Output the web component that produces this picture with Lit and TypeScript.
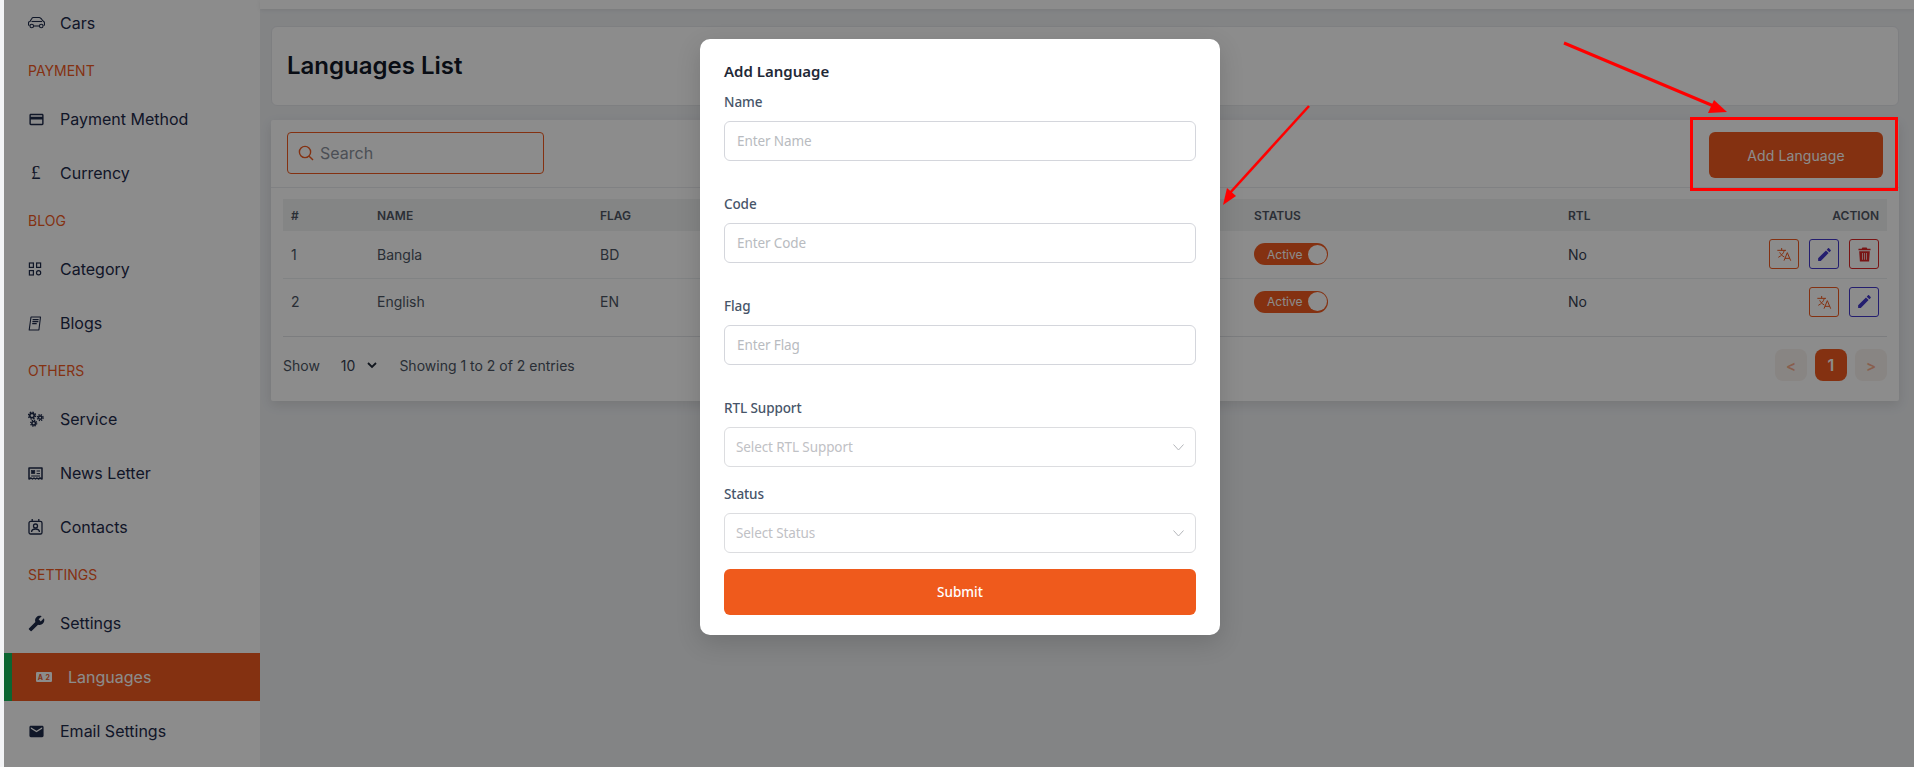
import { LitElement, html, css, svg } from "lit";
import { customElement } from "lit/decorators.js";

const ic = (body: unknown, size = 16) => html`<svg width=${size} height=${size} viewBox="0 0 24 24" fill="currentColor">${body}</svg>`;
const icons: Record<string, unknown> = {
  car: html`<svg width="17" height="12" viewBox="0 0 34 24" fill="none" stroke="currentColor" stroke-width="2.2"><path d="M3 17c-1.5 0-2-1-2-2v-3c0-2 1-3 3-3l3-5c1-2 2-3 4-3h11c2 0 3 1 5 3l3 4c2 1 3 2 3 4v3c0 1-.5 2-2 2"/><path d="M7 9h21"/><path d="M11 18h12"/><circle cx="7.5" cy="18" r="3.6"/><circle cx="26.5" cy="18" r="3.6"/></svg>`,
  card: ic(svg`<path d="M20 4H4c-1.11 0-1.99.89-1.99 2L2 18c0 1.11.89 2 2 2h16c1.11 0 2-.89 2-2V6c0-1.11-.89-2-2-2zm0 14H4v-6h16v6zm0-10H4V6h16v2z"/>`, 17),
  category: html`<svg width="14" height="14" viewBox="0 0 14 14" fill="none" stroke="currentColor" stroke-width="1.2"><rect x="1.4" y="1" width="4" height="4.4"/><rect x="8.6" y="1" width="4" height="4.4"/><rect x="1.4" y="8.6" width="4" height="4.4"/><circle cx="10.6" cy="10.8" r="2.1"/></svg>`,
  blog: html`<svg width="14" height="15" viewBox="0 0 14 15" fill="none" stroke="currentColor" stroke-width="1.1"><path d="M3 1h9.5l-1.6 13H1.2z" stroke-linejoin="round"/><path d="M4.6 3.6h6M4.4 5.6h6M4.2 7.6h4.5"/></svg>`,
  gears: html`<svg width="16" height="16" viewBox="0 0 16 16" fill="none" stroke="currentColor"><circle cx="4" cy="4.6" r="2.2" stroke-width="1.6"/><circle cx="4" cy="4.6" r="3.5" stroke-width="1.4" stroke-dasharray="1.5 1.25"/><circle cx="12.2" cy="6.6" r="1.7" stroke-width="1.5"/><circle cx="12.2" cy="6.6" r="2.9" stroke-width="1.3" stroke-dasharray="1.3 1"/><circle cx="5.7" cy="12.2" r="1.8" stroke-width="1.5"/><circle cx="5.7" cy="12.2" r="3" stroke-width="1.3" stroke-dasharray="1.3 1.05"/></svg>`,
  news: html`<svg width="15" height="15" viewBox="0 0 15 15" fill="none" stroke="currentColor" stroke-width="1.5"><path d="M1 13V2h13v11l-2-1-1.6 1-1.5-1-1.4 1-1.5-1-1.5 1-1.5-1z" stroke-linejoin="round"/><rect x="3.4" y="4.4" width="3.4" height="3.2" fill="currentColor" stroke-width=".6"/><path d="M8.6 5h3.4M8.6 7.6h3.4M3.2 10h8.8" stroke-width="1"/></svg>`,
  contact: html`<svg width="15" height="16" viewBox="0 0 15 16" fill="none" stroke="currentColor" stroke-width="1.3"><rect x="1" y="2.4" width="13" height="12.6" rx="1.6"/><path d="M4.2 0v2.4M10.8 0v2.4"/><circle cx="7.5" cy="7" r="2"/><path d="M3.6 13c0-2.2 1.6-3 3.9-3s3.9.8 3.9 3"/></svg>`,
  wrench: html`<svg width="17" height="17" viewBox="0 0 24 24" fill="currentColor"><g transform="translate(24 0) scale(-1 1)"><path d="M22.7 19l-9.1-9.1c.9-2.3.4-5-1.5-6.9-2-2-5-2.4-7.4-1.3L9 6 6 9 1.6 4.7C.4 7.1.9 10.1 2.9 12.1c1.9 1.9 4.6 2.4 6.9 1.5l9.1 9.1c.4.4 1 .4 1.4 0l2.3-2.3c.5-.4.5-1.1.1-1.4z"/></g></svg>`,
  mail: ic(svg`<path d="M20 4H4c-1.1 0-1.99.9-1.99 2L2 18c0 1.1.9 2 2 2h16c1.1 0 2-.9 2-2V6c0-1.1-.9-2-2-2zm0 4l-8 5-8-5V6l8 5 8-5v2z"/>`, 17),
  lang: html`<svg width="16" height="10" viewBox="0 0 16 10"><rect width="16" height="10" rx="1.2" fill="currentColor"/><text x="4.4" y="7.6" font-size="7" font-weight="700" text-anchor="middle" font-family="Inter" fill="#f15a1f">A</text><text x="11.6" y="7.6" font-size="7" font-weight="700" text-anchor="middle" font-family="Inter" fill="#f15a1f">2</text></svg>`,
};
const translate = html`<svg width="16" height="16" viewBox="0 0 24 24" fill="none" stroke="currentColor" stroke-width="1.5"><path d="M2 6.5h13M8.5 3v3.5M12.5 6.5c-1 4-4 8-9 10.5M5.5 9.5c1.5 3 4 5.500 7 7"/><path d="M12 22l5-12 5 12M13.500 18.500h7"/></svg>`;
const pencil = ic(svg`<path d="M3 17.25V21h3.750L17.810 9.940l-3.750-3.750L3 17.250zM20.710 7.040c.390-.390.390-1.020 0-1.410l-2.340-2.340c-.390-.390-1.020-.390-1.410 0l-1.830 1.830 3.750 3.750 1.830-1.830z"/>`, 17);
const trash = ic(svg`<path fill-rule="evenodd" d="M9 2h6l1 2h4.500v2h-17V4H8l1-2zM4.500 7.500h15L18.500 22h-13L4.500 7.500zM8.500 10v9.500h1V10h-1zm3 0v9.500h1V10h-1zm3 0v9.500h1V10h-1z"/>`, 17);

type Item = { s?: string; t?: string; i?: string; pound?: boolean; active?: boolean };
const menu: Item[] = [
  { t: "Cars", i: "car" },
  { s: "PAYMENT" },
  { t: "Payment Method", i: "card" },
  { t: "Currency", pound: true },
  { s: "BLOG" },
  { t: "Category", i: "category" },
  { t: "Blogs", i: "blog" },
  { s: "OTHERS" },
  { t: "Service", i: "gears" },
  { t: "News Letter", i: "news" },
  { t: "Contacts", i: "contact" },
  { s: "SETTINGS" },
  { t: "Settings", i: "wrench" },
  { t: "Languages", i: "lang", active: true },
  { t: "Email Settings", i: "mail" },
];

@customElement("app-root")
export class AppRoot extends LitElement {
  static styles = css`
    :host { display: block; position: relative; width: 1914px; height: 767px; overflow: hidden; font-family: Inter, "Noto Sans", sans-serif; background: #f3f4f6; }
    * { box-sizing: border-box; }
    .shell { display: flex; height: 767px; padding-left: 4px; }
    .side { width: 256px; flex: none; background: #fff; overflow: hidden; display: flex; flex-direction: column; }
    .list { margin-top: -1px; display: flex; flex-direction: column; gap: 6px; }
    .sec { height: 36px; padding: 0 0 2px 24px; display: flex; align-items: center; font-size: 14px; color: #f15a1f; }
    .item { height: 48px; display: flex; align-items: center; padding-left: 24px; font-size: 16px; color: #1e2a4a; flex: none; }
    .item .ico { width: 32px; flex: none; display: flex; align-items: center; }
    .item .pound { font-size: 19px; padding-left: 3px; font-family: "Liberation Serif", serif; }
    .item.active { background: #f15a1f; color: #fff; border-left: 8px solid #14b85a; padding-left: 24px; }
    .main { flex: 1; background: #eef0f3; display: flex; flex-direction: column; }
    .top { height: 9px; background: #fff; flex: none; box-shadow: 0 1px 4px rgba(0,0,0,.08); }
    .content { padding: 17px 15px 0 11px; display: flex; flex-direction: column; gap: 14px; }
    .card { background: #fff; border-radius: 6px; }
    .head { height: 80px; display: flex; align-items: center; padding: 0 0 2px 15px; border: 1px solid #e6e8ec; }
    h1 { margin: 0; font-size: 24px; font-weight: 600; color: #111827; }
    .panel { height: 281px; box-shadow: 0 4px 12px rgba(0,0,0,.1); border-radius: 2px; display: flex; flex-direction: column; }
    .bar { height: 68px; flex: none; padding: 12px 16px 0; display: flex; justify-content: space-between; align-items: flex-start; border-bottom: 1px solid #e9ebee; }
    .search { width: 257px; height: 42px; border: 1px solid #f15a1f; border-radius: 4px; display: flex; align-items: center; gap: 6px; padding-left: 10px; color: #f15a1f; }
    .search span { color: #8a919c; font-size: 16px; }
    .add { width: 174px; height: 46px; border-radius: 6px; background: #f15a1f; color: #fff; display: flex; align-items: center; justify-content: center; font-size: 14px; font-weight: 400; letter-spacing: .1px; }
    .body { padding: 11px 12px 0; }
    table { width: 1604px; border-collapse: collapse; table-layout: fixed; }
    th { height: 32px; background: #f1f2f3; font-size: 12px; font-weight: 600; color: #4f5663; text-align: left; padding: 0 0 0 8px; }
    td { height: 47px; font-size: 14px; color: #4b5563; padding: 0 0 0 8px; }
    tr.line td { border-bottom: 1px solid #eceef1; }
    .right { text-align: right; padding-right: 8px; }
    td.dark { color: #374151; }
    .acts { display: flex; justify-content: flex-end; gap: 10px; }
    .act { width: 30px; height: 30px; border: 1px solid; border-radius: 3px; display: flex; align-items: center; justify-content: center; }
    .o { color: #f15a1f; } .b { color: #4338ca; } .r { color: #dc2626; }
    .tog { width: 74px; height: 22px; border-radius: 11px; background: #f15a1f; display: flex; align-items: center; justify-content: space-between; padding: 0 1px 0 13px; color: #fff; font-size: 12px; }
    .tog i { width: 19px; height: 19px; border-radius: 50%; background: #fff; display: block; }
    .foot { margin-top: 11px; border-top: 1px solid #e2e4e8; padding-top: 12px; display: flex; align-items: center; justify-content: space-between; font-size: 14px; color: #4b5563; }
    .fl { display: flex; align-items: center; }
    .num { margin-left: 21px; color: #374151; }
    .chev { margin-left: 12px; margin-right: 22px; color: #1f2937; display: flex; }
    .pages { display: flex; gap: 8px; }
    .pg { width: 32px; height: 32px; border-radius: 8px; background: #f8f2ee; color: #f8ab8c; display: flex; align-items: center; justify-content: center; font-size: 15px; font-weight: 600; }
    .pg.on { background: #f15a1f; color: #fff; font-size: 16px; }
    .overlay { position: absolute; inset: 0 0 0 4px; background: rgba(0,0,0,.45); }
    .modal { position: absolute; left: 700px; top: 39px; width: 520px; height: 596px; background: #fff; border-radius: 10px; padding: 20px 24px 20px; font-family: "Noto Sans", sans-serif; box-shadow: 0 8px 24px rgba(0,0,0,.15); display: flex; flex-direction: column; }
    .title { height: 24px; font-size: 15px; font-weight: 600; line-height: 24px; color: #1f2937; margin-bottom: 9px; }
    .lab { height: 20px; line-height: 20px; font-size: 13.5px; letter-spacing: -.1px; font-weight: 500; color: #475569; margin-bottom: 9px; }
    .inp { height: 40px; border: 1px solid #d4d6dc; border-radius: 6px; display: flex; align-items: center; padding: 0 12px; font-size: 13.5px; letter-spacing: -.1px; color: #b8bbc0; justify-content: space-between; flex: none; }
    .sel { border-color: #dcdde0; padding: 0 11px; color: #bfc1c5; }
    .g33 { margin-bottom: 33px; } .g17 { margin-bottom: 17px; } .g16 { margin-bottom: 16px; }
    .submit { height: 46px; border-radius: 6px; background: #ef5a1c; color: #fff; font-size: 13.5px; font-weight: 500; display: flex; align-items: center; justify-content: center; flex: none; }
    .marks { position: absolute; inset: 0; pointer-events: none; }
  `;

  private row(n: string, name: string, flag: string, del: boolean, line: boolean) {
    return html`<tr class=${line ? "line" : ""}>
      <td>${n}</td><td>${name}</td><td>${flag}</td>
      <td><div class="tog">Active<i></i></div></td>
      <td class="dark">No</td>
      <td class="right"><div class="acts">
        <div class="act o">${translate}</div><div class="act b">${pencil}</div>
        ${del ? html`<div class="act r">${trash}</div>` : ""}
      </div></td>
    </tr>`;
  }

  private field(label: string, ph: string, gap: string) {
    return html`<div class="lab">${label}</div><div class="inp ${gap}">${ph}</div>`;
  }
  private select(label: string, ph: string, gap: string) {
    return html`<div class="lab">${label}</div><div class="inp sel ${gap}">${ph}
      <svg width="11" height="7" viewBox="0 0 11 7" fill="none" stroke="#b4b6ba" stroke-width="1"><path d="M.5.5l5 5.5 5-5.5"/></svg></div>`;
  }

  render() {
    return html`
      <div class="shell">
        <aside class="side"><div class="list">
          ${menu.map((m) => m.s
            ? html`<div class="sec">${m.s}</div>`
            : html`<div class="item ${m.active ? "active" : ""}">
                <span class="ico">${m.pound ? html`<span class="pound">£</span>` : icons[m.i!]}</span>${m.t}
              </div>`)}
        </div></aside>
        <main class="main">
          <div class="top"></div>
          <div class="content">
            <div class="card head"><h1>Languages List</h1></div>
            <div class="card panel">
              <div class="bar">
                <div class="search">
                  <svg width="16" height="16" viewBox="0 0 16 16" fill="none" stroke="currentColor" stroke-width="1.4"><circle cx="7" cy="7" r="5.6"/><path d="M11.2 11.2L15 15"/></svg>
                  <span>Search</span>
                </div>
                <div class="add">Add Language</div>
              </div>
              <div class="body">
                <table>
                  <colgroup><col style="width:86px"/><col style="width:223px"/><col style="width:654px"/><col style="width:314px"/><col style="width:200px"/><col style="width:127px"/></colgroup>
                  <thead><tr><th>#</th><th>NAME</th><th>FLAG</th><th>STATUS</th><th>RTL</th><th class="right">ACTION</th></tr></thead>
                  <tbody>
                    ${this.row("1", "Bangla", "BD", true, true)}
                    ${this.row("2", "English", "EN", false, false)}
                  </tbody>
                </table>
                <div class="foot">
                  <div class="fl">
                    <span>Show</span><span class="num">10</span>
                    <span class="chev"><svg width="10" height="7" viewBox="0 0 10 7" fill="none" stroke="currentColor" stroke-width="1.8"><path d="M1 1l4 4 4-4"/></svg></span>
                    <span>Showing 1 to 2 of 2 entries</span>
                  </div>
                  <div class="pages"><div class="pg">&lt;</div><div class="pg on">1</div><div class="pg">&gt;</div></div>
                </div>
              </div>
            </div>
          </div>
        </main>
      </div>
      <div class="overlay"></div>
      <div class="modal">
        <div class="title">Add Language</div>
        ${this.field("Name", "Enter Name", "g33")}
        ${this.field("Code", "Enter Code", "g33")}
        ${this.field("Flag", "Enter Flag", "g33")}
        ${this.select("RTL Support", "Select RTL Support", "g17")}
        ${this.select("Status", "Select Status", "g16")}
        <div class="submit">Submit</div>
      </div>
      <svg class="marks" width="1914" height="767" viewBox="0 0 1914 767">
        <rect x="1691.5" y="118.5" width="205" height="71" fill="none" stroke="#ff0000" stroke-width="3"/>
        <path d="M1564 43L1716 107" stroke="#ff0000" stroke-width="3" fill="none"/>
        <path d="M1727 112L1708 113L1714 100z" fill="#ff0000"/>
        <path d="M1309 106L1229 194" stroke="#ff0000" stroke-width="2.6" fill="none"/>
        <path d="M1223 205L1227 188L1236 196z" fill="#ff0000"/>
      </svg>
    `;
  }
}
